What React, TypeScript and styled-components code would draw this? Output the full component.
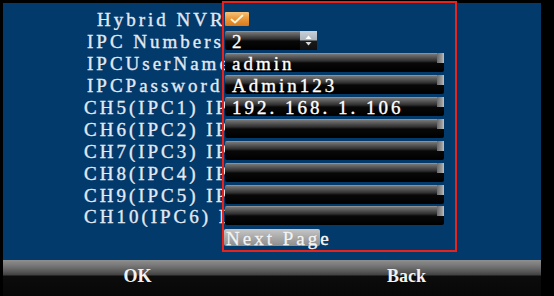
import React from 'react';
import styled, { createGlobalStyle } from 'styled-components';

const GlobalStyle = createGlobalStyle`
  html, body {
    margin: 0;
    padding: 0;
    background: #000;
  }
  body {
    font-family: "Liberation Serif", "DejaVu Serif", serif;
  }
`;

const Screen = styled.div`
  position: relative;
  width: 554px;
  height: 296px;
  box-sizing: border-box;
  padding: 3px 13px 0 3px;
  background: #000;
  display: flex;
  flex-direction: column;
  overflow: hidden;
`;

const Panel = styled.div`
  flex: 0 0 257px;
  background: #023a6c;
  box-sizing: border-box;
  padding-top: 5px;
`;

const Form = styled.div`
  display: flex;
  flex-direction: column;
`;

const Row = styled.div`
  display: grid;
  grid-template-columns: 222px 1fr;
  align-items: center;
  height: 21.9px;
`;

// labels run on under the fields, as in the device menu
const Label = styled.div<{ $indent: number }>`
  box-sizing: border-box;
  padding-left: ${p => p.$indent}px;
  padding-top: 2px;
  white-space: nowrap;
  overflow: hidden;
  color: #e2e9f1;
  font-size: 19px;
  letter-spacing: 3px;
  line-height: 21px;
  -webkit-text-stroke: 0.35px #e2e9f1;
`;

const Cell = styled.div`
  display: flex;
  align-items: center;
`;

const Checkbox = styled.div`
  width: 24px;
  height: 14px;
  border-radius: 1px;
  background: linear-gradient(to bottom, #f6c27a 0%, #eb9a3c 45%, #d97a1c 100%);
  display: flex;
  align-items: center;
  justify-content: center;
`;

const fieldBg = `
  linear-gradient(
    to bottom,
    #a8a8a8 0px,
    #777 1px,
    #585858 4px,
    #2e2e2e 8px,
    #080808 10px,
    #000 100%
  )
`;

const Field = styled.div<{ $width: number }>`
  position: relative;
  box-sizing: border-box;
  width: ${p => p.$width}px;
  height: 19px;
  border-radius: 2px;
  background: ${fieldBg};
  color: #fff;
  font-size: 19px;
  letter-spacing: 3px;
  line-height: 21px;
  padding-left: 7px;
  white-space: nowrap;
  -webkit-text-stroke: 0.35px #fff;

  &::after {
    content: '';
    position: absolute;
    right: 0;
    top: 0;
    width: 7px;
    height: 10px;
    background: linear-gradient(to right, #6a6a6a, #9a9a9a 70%, #c4c4c4);
  }
`;

const SpinButton = styled.div`
  position: absolute;
  right: 0;
  top: 0;
  width: 17px;
  height: 19px;
  background: linear-gradient(to bottom, #c9d1d9 0px, #a9b3bd 9px, #1a1a1a 10px, #101010 100%);
  display: flex;
  align-items: center;
  justify-content: center;
  z-index: 1;
`;

const NextButton = styled.div`
  margin-left: -1px;
  width: 94px;
  height: 17px;
  border-radius: 2px;
  background: linear-gradient(to bottom, #c6c6c6 0%, #a9a9a9 50%, #8e8e8e 100%);
  color: #f4f4f4;
  font-size: 19px;
  letter-spacing: 3px;
  line-height: 19px;
  padding-left: 2px;
  white-space: nowrap;
  text-shadow: 0 0 1px #777;
  -webkit-text-stroke: 0.35px #f4f4f4;
`;

const Highlight = styled.div`
  position: absolute;
  left: 222px;
  top: 1px;
  width: 235px;
  height: 251px;
  box-sizing: border-box;
  border: 2px solid #e8221c;
  pointer-events: none;
`;

const BottomBar = styled.div`
  flex: 0 0 36px;
  display: grid;
  grid-template-columns: 1fr 1fr;
  background: linear-gradient(
    to bottom,
    #8e8e8e 0px,
    #7a7a7a 5px,
    #5a5a5a 11px,
    #404040 15px,
    #0c0c0c 16px,
    #070707 100%
  );
`;

const BarButton = styled.div`
  text-align: center;
  color: #f2f2f2;
  font-size: 18px;
  font-weight: bold;
  line-height: 33px;
`;

const Check = () => (
  <svg width="14" height="10" viewBox="0 0 14 10">
    <path d="M1.5 5.5 L5 8.5 L12.5 1.5" fill="none" stroke="#fff6d8" strokeWidth="1.8" strokeLinecap="round" strokeLinejoin="round" />
  </svg>
);

const SpinArrows = () => (
  <svg width="9" height="15" viewBox="0 0 9 15">
    <path d="M4.5 2.5 L7.5 6 L1.5 6 Z" fill="#ffffff" />
    <path d="M4.5 12.5 L7.5 9 L1.5 9 Z" fill="#d8d8d8" />
  </svg>
);

type RowData = {
  label: string;
  indent: number;
  value?: string;
};

const fields: RowData[] = [
  { label: 'IPCUserName', indent: 84, value: 'admin' },
  { label: 'IPCPassword', indent: 84, value: 'Admin123' },
  { label: 'CH5(IPC1) IP', indent: 81, value: '192. 168. 1. 106' },
  { label: 'CH6(IPC2) IP', indent: 81, value: '' },
  { label: 'CH7(IPC3) IP', indent: 81, value: '' },
  { label: 'CH8(IPC4) IP', indent: 81, value: '' },
  { label: 'CH9(IPC5) IP', indent: 81, value: '' },
  { label: 'CH10(IPC6) IP', indent: 81, value: '' },
];

export default function App() {
  return (
    <>
      <GlobalStyle />
      <Screen>
        <Panel>
          <Form>
            <Row>
              <Label $indent={94}>Hybrid NVR</Label>
              <Cell>
                <Checkbox>
                  <Check />
                </Checkbox>
              </Cell>
            </Row>
            <Row>
              <Label $indent={84}>IPC Numbers</Label>
              <Cell>
                <Field $width={92}>
                  2
                  <SpinButton>
                    <SpinArrows />
                  </SpinButton>
                </Field>
              </Cell>
            </Row>
            {fields.map(f => (
              <Row key={f.label}>
                <Label $indent={f.indent}>{f.label}</Label>
                <Cell>
                  <Field $width={219}>{f.value}</Field>
                </Cell>
              </Row>
            ))}
            <Row>
              <div />
              <Cell>
                <NextButton>Next Page</NextButton>
              </Cell>
            </Row>
          </Form>
        </Panel>
        <BottomBar>
          <BarButton>OK</BarButton>
          <BarButton>Back</BarButton>
        </BottomBar>
        <Highlight />
      </Screen>
    </>
  );
}
